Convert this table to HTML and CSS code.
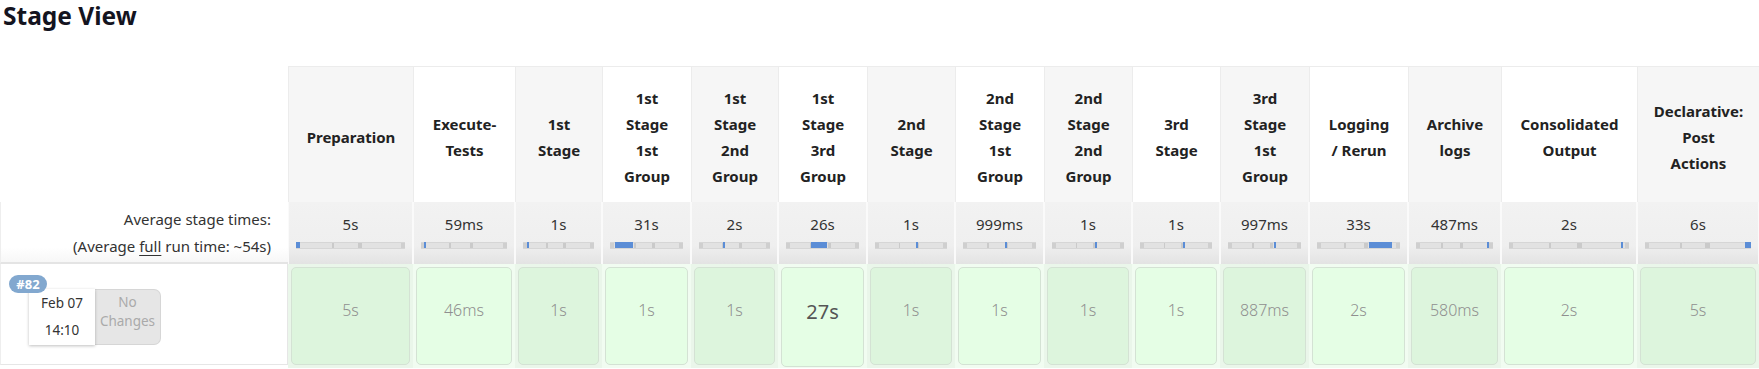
FILE: index.html
```html
<!DOCTYPE html>
<html>
<head>
<meta charset="utf-8">
<link rel="stylesheet" href="styles.css">
</head>
<body>
<div class="stage-view">
  <h2 class="title">Stage View</h2>
  <div class="grid">
    <div class="corner"></div>
    <div class="sh odd">Preparation</div>
    <div class="sh even">Execute-<br>Tests</div>
    <div class="sh odd">1st<br>Stage</div>
    <div class="sh even">1st<br>Stage<br>1st<br>Group</div>
    <div class="sh odd">1st<br>Stage<br>2nd<br>Group</div>
    <div class="sh even">1st<br>Stage<br>3rd<br>Group</div>
    <div class="sh odd">2nd<br>Stage</div>
    <div class="sh even">2nd<br>Stage<br>1st<br>Group</div>
    <div class="sh odd">2nd<br>Stage<br>2nd<br>Group</div>
    <div class="sh even">3rd<br>Stage</div>
    <div class="sh odd">3rd<br>Stage<br>1st<br>Group</div>
    <div class="sh even">Logging<br>/ Rerun</div>
    <div class="sh odd">Archive<br>logs</div>
    <div class="sh even">Consolidated<br>Output</div>
    <div class="sh odd">Declarative:<br>Post<br>Actions</div>

    <div class="avg-label">
      <div>Average stage times:</div>
      <div>(Average <u>full</u> run time: ~54s)</div>
    </div>
    <div class="avg"><div class="avg-t">5s</div><div class="bar"><span class="seg" style="left:0%;width:4%"></span></div></div>
    <div class="avg"><div class="avg-t">59ms</div><div class="bar"><span class="seg line" style="left:4%"></span></div></div>
    <div class="avg"><div class="avg-t">1s</div><div class="bar"><span class="seg line" style="left:6%"></span></div></div>
    <div class="avg"><div class="avg-t">31s</div><div class="bar"><span class="seg" style="left:7%;width:25%"></span></div></div>
    <div class="avg"><div class="avg-t">2s</div><div class="bar"><span class="seg line" style="left:34%"></span></div></div>
    <div class="avg"><div class="avg-t">26s</div><div class="bar"><span class="seg" style="left:34%;width:22%"></span></div></div>
    <div class="avg"><div class="avg-t">1s</div><div class="bar"><span class="seg line" style="left:57%"></span></div></div>
    <div class="avg"><div class="avg-t">999ms</div><div class="bar"><span class="seg line" style="left:58%"></span></div></div>
    <div class="avg"><div class="avg-t">1s</div><div class="bar"><span class="seg line" style="left:60%"></span></div></div>
    <div class="avg"><div class="avg-t">1s</div><div class="bar"><span class="seg line" style="left:60%"></span></div></div>
    <div class="avg"><div class="avg-t">997ms</div><div class="bar"><span class="seg line" style="left:63%"></span></div></div>
    <div class="avg"><div class="avg-t">33s</div><div class="bar"><span class="seg" style="left:63%;width:27%"></span></div></div>
    <div class="avg"><div class="avg-t">487ms</div><div class="bar"><span class="seg line" style="left:92%"></span></div></div>
    <div class="avg"><div class="avg-t">2s</div><div class="bar"><span class="seg line" style="left:93%"></span></div></div>
    <div class="avg"><div class="avg-t">6s</div><div class="bar"><span class="seg" style="left:94%;width:6%"></span></div></div>

    <div class="build">
      <span class="badge">#82</span>
      <div class="build-box">
        <div class="date">
          <div>Feb 07</div>
          <div>14:10</div>
        </div>
        <div class="changes">No<br>Changes</div>
      </div>
    </div>
    <div class="cell odd"><div class="box">5s</div></div>
    <div class="cell even"><div class="box">46ms</div></div>
    <div class="cell odd"><div class="box">1s</div></div>
    <div class="cell even"><div class="box">1s</div></div>
    <div class="cell odd"><div class="box">1s</div></div>
    <div class="cell even"><div class="box big">27s</div></div>
    <div class="cell odd"><div class="box">1s</div></div>
    <div class="cell even"><div class="box">1s</div></div>
    <div class="cell odd"><div class="box">1s</div></div>
    <div class="cell even"><div class="box">1s</div></div>
    <div class="cell odd"><div class="box">887ms</div></div>
    <div class="cell even"><div class="box">2s</div></div>
    <div class="cell odd"><div class="box">580ms</div></div>
    <div class="cell even"><div class="box">2s</div></div>
    <div class="cell odd"><div class="box">5s</div></div>
  </div>
</div>
</body>
</html>
```
FILE: styles.css
```css
html, body {
  margin: 0;
  padding: 0;
  background: #fff;
  overflow: hidden;
}
body {
  font-family: "Noto Sans", "Open Sans", sans-serif;
  color: #333;
}
.stage-view {
  width: 1759px;
}
.title {
  margin: 0;
  padding: 0 0 0 3px;
  height: 66px;
  box-sizing: border-box;
  font-size: 24.5px;
  font-weight: 700;
  color: #14141f;
  line-height: 32px;
}
.grid {
  display: grid;
  grid-template-columns: 288px 125px 102px 87px 89px 87px 89px 88px 89px 88px 88px 89px 99px 93px 136px 122px;
  grid-template-rows: 136px 62px 104px;
}
.corner {
  background: #fff;
}
.sh {
  display: flex;
  align-items: center;
  justify-content: center;
  text-align: center;
  font-weight: 700;
  font-size: 15px;
  line-height: 26px;
  color: #222;
  border-top: 1px solid #ececec;
  border-left: 1px solid #ececec;
  box-sizing: border-box;
  padding-top: 4px;
}
.sh.odd { background: #f6f6f6; }
.sh.even { background: #fff; }

.avg-label {
  display: flex;
  flex-direction: column;
  justify-content: center;
  align-items: flex-end;
  padding-right: 17px;
  font-size: 15px;
  line-height: 27px;
  color: #333;
  border-left: 1px solid #eee;
  border-bottom: 2px solid #e4e4e4;
  background: linear-gradient(#fff 0, #fff 75%, #f7f7f7 100%);
  box-sizing: border-box;
  padding-top: 2px;
}
.avg-label u { text-decoration-thickness: 1px; text-underline-offset: 3px; }
.avg {
  background: linear-gradient(#f2f2f2 0, #efefef 70%, #e3e3e3 100%);
  border-left: 1px solid #fafafa;
  border-right: 1px solid #fafafa;
  box-sizing: border-box;
  padding: 11px 7px 0 7px;
  text-align: center;
}
.avg-t {
  font-size: 15px;
  line-height: 22px;
  color: #333;
}
.bar {
  position: relative;
  margin-top: 7px;
  background:
    linear-gradient(90deg, #cfcfcf 0, #cfcfcf 4px, transparent 4px, transparent calc(100% - 4px), #cfcfcf calc(100% - 4px)),
    linear-gradient(90deg, transparent 33%, #cacaca 33%, #cacaca 35%, transparent 35%, transparent 57%, #cacaca 57%, #cacaca 61%, transparent 61%),
    #e2e2e2;
  border-top: 1px solid #d6d6d6;
  border-bottom: 1px solid #d6d6d6;
  box-sizing: border-box;
  height: 7px;
}
.seg {
  position: absolute;
  top: -1px;
  height: 6px;
  background: #5b8dd6;
}
.seg.line {
  width: 2px;
}

.build {
  position: relative;
  border-left: 1px solid #eee;
  border-right: 1px solid #e6e6e6;
  border-bottom: 1px solid #e6e6e6;
  box-sizing: border-box;
  height: 101px;
  padding: 25px 0 0 28px;
}
.badge {
  position: absolute;
  left: 8px;
  top: 11px;
  width: 38px;
  height: 18px;
  border-radius: 9px;
  background: #82a8cf;
  color: #fff;
  font-size: 13px;
  font-weight: 700;
  line-height: 18px;
  text-align: center;
  z-index: 2;
}
.build-box {
  display: flex;
}
.date {
  width: 66px;
  height: 56px;
  background: #fff;
  box-shadow: 0 1px 3px rgba(0,0,0,0.25);
  font-size: 13.5px;
  line-height: 27px;
  text-align: center;
  color: #333;
  padding-top: 1px;
  box-sizing: border-box;
  position: relative;
  z-index: 1;
}
.changes {
  width: 66px;
  height: 56px;
  background: #e6e6e6;
  border: 1px solid #d6d6d6;
  border-left: none;
  border-radius: 0 7px 7px 0;
  box-sizing: border-box;
  font-size: 13.5px;
  line-height: 19px;
  color: #aaa;
  text-align: center;
  padding-top: 3px;
}
.cell {
  padding: 3px 3px 0 3px;
  box-sizing: border-box;
}
.cell.odd { background: #eaf6ea; }
.cell.even { background: #f1fcf1; }
.box {
  height: 98px;
  border: 1px solid #d4e2d4;
  border-radius: 5px;
  box-sizing: border-box;
  display: flex;
  align-items: center;
  justify-content: center;
  padding-bottom: 12px;
  font-size: 16px;
  font-weight: 300;
  color: #8f8f8f;
}
.cell.odd .box { background: #ddf5dd; }
.cell.even .box { background: #e5fee5; }
.box.big {
  font-size: 20px;
  font-weight: 400;
  color: #555;
  height: 100px;
}
```
